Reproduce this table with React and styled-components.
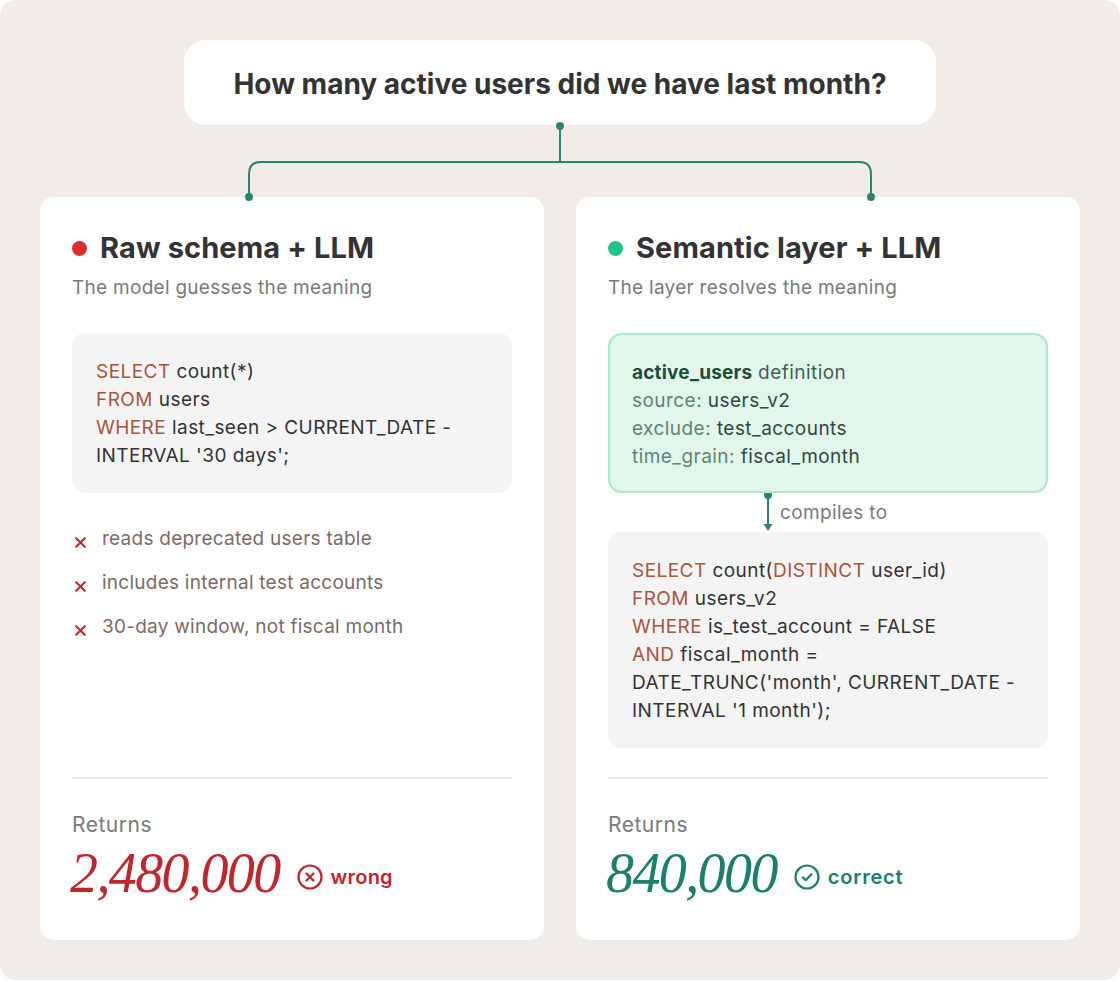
import React from "react";
import styled, { createGlobalStyle } from "styled-components";

const Global = createGlobalStyle`
  html, body { margin: 0; padding: 0; background: #ffffff; }
  body { font-family: Inter, "Noto Sans", sans-serif; -webkit-font-smoothing: antialiased; }
`;

const Frame = styled.div`
  width: 1120px;
  height: 980px;
  box-sizing: border-box;
  background: #f1ece8;
  border-radius: 16px;
  padding: 40px 40px 40px;
  display: flex;
  flex-direction: column;
  align-items: center;
`;

const Question = styled.div`
  height: 85px;
  box-sizing: border-box;
  padding: 0 48px;
  width: 752px;
  background: #ffffff;
  border-radius: 22px;
  display: flex;
  align-items: center;
  justify-content: center;
  font-size: 28px;
  font-weight: 700;
  letter-spacing: 0;
  color: #333333;
  padding-top: 2px;
`;

const Connector = styled.svg`
  display: block;
  width: 1040px;
  height: 72px;
  overflow: visible;
  position: relative;
  z-index: 1;
`;

const Columns = styled.div`
  width: 100%;
  display: grid;
  grid-template-columns: 504px 504px;
  gap: 32px;
  flex: 1;
`;

const Card = styled.div`
  background: #ffffff;
  border-radius: 14px;
  padding: 34px 32px 37px;
  display: flex;
  flex-direction: column;
`;

const TitleRow = styled.div`
  display: flex;
  align-items: center;
  gap: 13px;
  height: 34px;
`;

const Dot = styled.span`
  width: 15px;
  height: 15px;
  border-radius: 50%;
  background: ${(p) => p.$color};
  flex: none;
`;

const Title = styled.h2`
  margin: 0;
  font-size: 29px;
  line-height: 34px;
  font-weight: 700;
  letter-spacing: 0.1px;
  color: #333333;
`;

const Subtitle = styled.p`
  margin: 10px 0 0;
  font-size: 19px;
  line-height: 26px;
  letter-spacing: 0.28px;
  color: #7a7a7a;
`;

const CodeBox = styled.div`
  margin-top: ${(p) => p.$mt || 0}px;
  background: ${(p) => (p.$green ? "#e3f6ec" : "#f4f4f4")};
  border: ${(p) => (p.$green ? "2px solid #a9e8cd" : "none")};
  border-radius: 14px;
  padding: ${(p) => (p.$green ? "24px 22px 20px" : "25px 24px 23px")};
  font-size: 19px;
  line-height: 28px;
  letter-spacing: 0.45px;
  color: #333333;
`;

const Line = styled.div`
  white-space: pre;
`;

const Kw = styled.span`
  color: #a9553f;
`;

const DefName = styled.span`
  font-weight: 700;
  letter-spacing: 0.2px;
  color: #1f4d38;
`;

const DefText = styled.span`
  color: #3d5f50;
`;

const DefKey = styled.span`
  color: #5d8574;
`;

const DefVal = styled.span`
  color: #2d4a3d;
`;

const Issues = styled.ul`
  list-style: none;
  margin: 33px 0 0;
  padding: 0;
  display: flex;
  flex-direction: column;
  gap: 18px;
`;

const Issue = styled.li`
  display: flex;
  align-items: center;
  gap: 16px;
  padding-left: 3px;
  font-size: 19px;
  line-height: 26px;
  letter-spacing: 0.25px;
  color: #7d6a66;
`;

const CrossMark = styled.svg`
  width: 11px;
  height: 11px;
  flex: none;
  margin-top: 6px;
`;

const Compile = styled.div`
  height: 39px;
  display: flex;
  align-items: center;
  gap: 6px;
  padding-left: 154px;
  font-size: 19px;
  letter-spacing: 0.35px;
  color: #7a7a7a;
`;

const Footer = styled.div`
  margin-top: auto;
  border-top: 2px solid #ebe6e2;
  padding-top: 32px;
`;

const ReturnsLabel = styled.div`
  font-size: 21px;
  line-height: 28px;
  letter-spacing: 0.5px;
  color: #7a7a7a;
`;

const ResultRow = styled.div`
  display: flex;
  align-items: center;
  gap: 17px;
  height: 60px;
  margin-top: 4px;
`;

const BigNumber = styled.span`
  font-family: "Liberation Serif", "DejaVu Serif", serif;
  font-style: italic;
  font-size: 56px;
  line-height: 60px;
  letter-spacing: -1.6px;
  color: ${(p) => p.$color};
  margin-left: -2px;
`;

const Verdict = styled.span`
  display: inline-flex;
  align-items: center;
  gap: 8px;
  margin-top: 8px;
  font-size: 20px;
  font-weight: 600;
  letter-spacing: ${(p) => p.$spacing || "0.2px"};
  color: ${(p) => p.$color};
`;

const RED = "#bf262d";
const GREEN = "#1b7f6b";
const LINE = "#2a8474";

const Cross = () => (
  <CrossMark viewBox="0 0 11 11">
    <path d="M1.2 1.2 L9.8 9.8 M9.8 1.2 L1.2 9.8" stroke="#c62a30" strokeWidth="2.2" strokeLinecap="round" />
  </CrossMark>
);

const CircleIcon = ({ color, kind }) => (
  <svg width="26" height="26" viewBox="0 0 26 26" style={{ flex: "none" }}>
    <circle cx="13" cy="13" r="11.5" fill="none" stroke={color} strokeWidth="2.2" />
    {kind === "x" ? (
      <path d="M9.5 9.5 L16.5 16.5 M16.5 9.5 L9.5 16.5" stroke={color} strokeWidth="2.2" strokeLinecap="round" />
    ) : (
      <path d="M8.8 13.4 L11.8 16.2 L17.4 10.2" fill="none" stroke={color} strokeWidth="2.2" strokeLinecap="round" strokeLinejoin="round" />
    )}
  </svg>
);

export default function App() {
  return (
    <>
      <Global />
      <Frame>
        <Question>How many active users did we have last month?</Question>
        <Connector viewBox="0 0 1040 72">
          <path
            d="M520 1 V37 M209 72 V49 Q209 37 221 37 H819 Q831 37 831 49 V72"
            fill="none"
            stroke={LINE}
            strokeWidth="2"
          />
          <circle cx="520" cy="1" r="4" fill={LINE} />
          <circle cx="209" cy="72" r="4" fill={LINE} />
          <circle cx="831" cy="72" r="4" fill={LINE} />
        </Connector>
        <Columns>
          <Card>
            <TitleRow>
              <Dot $color="#dc2d2d" />
              <Title>Raw schema + LLM</Title>
            </TitleRow>
            <Subtitle>The model guesses the meaning</Subtitle>
            <CodeBox $mt={32}>
              <Line><Kw>SELECT</Kw> count(*)</Line>
              <Line><Kw>FROM</Kw> users</Line>
              <Line><Kw>WHERE</Kw> last_seen &gt; CURRENT_DATE -</Line>
              <Line>INTERVAL '30 days';</Line>
            </CodeBox>
            <Issues>
              <Issue><Cross />reads deprecated users table</Issue>
              <Issue><Cross />includes internal test accounts</Issue>
              <Issue><Cross />30-day window, not fiscal month</Issue>
            </Issues>
            <Footer>
              <ReturnsLabel>Returns</ReturnsLabel>
              <ResultRow>
                <BigNumber $color={RED}>2,480,000</BigNumber>
                <Verdict $color={RED}>
                  <CircleIcon color={RED} kind="x" />
                  wrong
                </Verdict>
              </ResultRow>
            </Footer>
          </Card>
          <Card>
            <TitleRow>
              <Dot $color="#1fc28b" />
              <Title>Semantic layer + LLM</Title>
            </TitleRow>
            <Subtitle>The layer resolves the meaning</Subtitle>
            <CodeBox $mt={32} $green>
              <Line><DefName>active_users</DefName> <DefText>definition</DefText></Line>
              <Line><DefKey>source:</DefKey> <DefVal>users_v2</DefVal></Line>
              <Line><DefKey>exclude:</DefKey> <DefVal>test_accounts</DefVal></Line>
              <Line><DefKey>time_grain:</DefKey> <DefVal>fiscal_month</DefVal></Line>
            </CodeBox>
            <Compile>
              <svg width="12" height="39" viewBox="0 0 12 39" style={{ flex: "none" }}>
                <circle cx="6" cy="2" r="4" fill={LINE} />
                <path d="M6 2 V32" stroke={LINE} strokeWidth="2" />
                <path d="M1.5 31 H10.5 L6 38 Z" fill={LINE} />
              </svg>
              compiles to
            </Compile>
            <CodeBox>
              <Line><Kw>SELECT</Kw> count(<Kw>DISTINCT</Kw> user_id)</Line>
              <Line><Kw>FROM</Kw> users_v2</Line>
              <Line><Kw>WHERE</Kw> is_test_account = FALSE</Line>
              <Line><Kw>AND</Kw> fiscal_month =</Line>
              <Line>DATE_TRUNC('month', CURRENT_DATE -</Line>
              <Line>INTERVAL '1 month');</Line>
            </CodeBox>
            <Footer>
              <ReturnsLabel>Returns</ReturnsLabel>
              <ResultRow>
                <BigNumber $color={GREEN}>840,000</BigNumber>
                <Verdict $color={GREEN} $spacing="0.8px">
                  <CircleIcon color={GREEN} kind="check" />
                  correct
                </Verdict>
              </ResultRow>
            </Footer>
          </Card>
        </Columns>
      </Frame>
    </>
  );
}
